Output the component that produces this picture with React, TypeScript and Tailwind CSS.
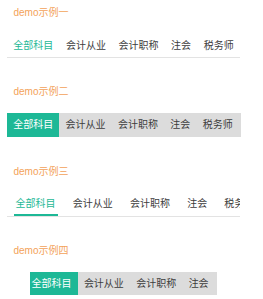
import React from "react";

const tabs = ["全部科目", "会计从业", "会计职称", "注会", "税务师"];
const font = { fontFamily: '"Liberation Sans", "Noto Sans CJK SC", sans-serif' };

function Title({ children }: { children: React.ReactNode }) {
  return (
    <div className="h-[14px] leading-[14px] text-[10px] text-[#f3a259] pl-[13.5px]">
      {children}
    </div>
  );
}

export default function App() {
  return (
    <div className="bg-white w-[263px] h-[299px] overflow-hidden text-[10px]" style={font}>
      {/* demo 1 */}
      <section className="pt-[6px] h-[79.3px]">
        <Title>demo示例一</Title>
        <div className="mt-[14px] ml-[7px] w-[233px] flex border-b border-[#e3e3e3] overflow-hidden">
          {tabs.map((t, i) => (
            <div
              key={t}
              className={`h-[23px] leading-[23px] px-[6.3px] whitespace-nowrap shrink-0 ${
                i === 0 ? "text-[#1db896]" : "text-[#3c3c3c]"
              }`}
            >
              {t}
            </div>
          ))}
        </div>
      </section>

      {/* demo 2 */}
      <section className="pt-[6px] h-[79.3px]">
        <Title>demo示例二</Title>
        <div className="mt-[14px] ml-[7px] w-[233.5px] flex bg-[#dcdcdc] overflow-hidden">
          {tabs.map((t, i) => (
            <div
              key={t}
              className={`h-[23.3px] leading-[23.3px] px-[6.2px] whitespace-nowrap shrink-0 ${
                i === 0 ? "bg-[#1db896] text-white" : "text-[#3c3c3c]"
              }`}
            >
              {t}
            </div>
          ))}
        </div>
      </section>

      {/* demo 3 */}
      <section className="pt-[6px] h-[79.3px]">
        <Title>demo示例三</Title>
        <div className="mt-[14px] ml-[7px] w-[233px] flex border-b border-[#e3e3e3] overflow-hidden">
          {tabs.map((t, i) => (
            <div
              key={t}
              className={`h-[23px] leading-[22px] px-[8.6px] whitespace-nowrap shrink-0 ${
                i === 0 ? "text-[#1db896]" : "text-[#3c3c3c]"
              }`}
            >
              <span className="relative inline-block h-full">
                {t}
                {i === 0 && (
                  <span className="absolute left-[-2px] right-[-2px] bottom-0 h-[2px] bg-[#1db896]" />
                )}
              </span>
            </div>
          ))}
        </div>
      </section>

      {/* demo 4 */}
      <section className="pt-[6px] h-[79.3px]">
        <Title>demo示例四</Title>
        <div className="mt-[14px] ml-[7px] w-[233px] flex justify-center">
          <div className="w-[187px] flex bg-[#dcdcdc] overflow-hidden">
            {tabs.slice(0, 4).map((t, i) => (
              <div
                key={t}
                className={`h-[23.3px] leading-[23.3px] whitespace-nowrap shrink-0 ${
                  i === 0 ? "bg-[#1db896] text-white pl-[1.5px] pr-[6.2px]" : "text-[#3c3c3c] px-[6.2px]"
                }`}
              >
                {t}
              </div>
            ))}
          </div>
        </div>
      </section>
    </div>
  );
}
